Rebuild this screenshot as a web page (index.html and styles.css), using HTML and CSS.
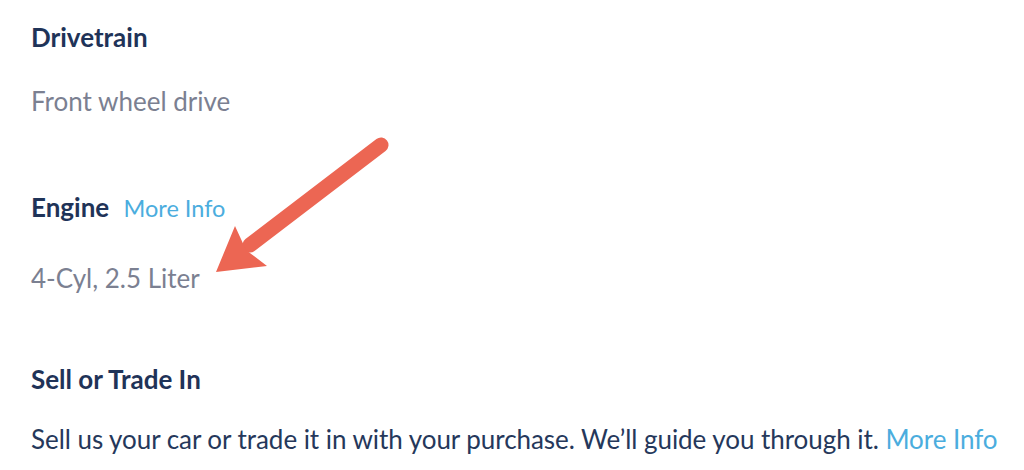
FILE: index.html
```
<!DOCTYPE html>
<html lang="en">
<head>
    <meta charset="UTF-8">
    <title>Vehicle details</title>
    <link rel="stylesheet" href="styles.css">
</head>
<body>
<div class="specs">
    <div class="spec spec-first">
        <h3 class="spec-title">Drivetrain</h3>
        <p class="spec-value">Front wheel drive</p>
    </div>
    <div class="spec spec-engine">
        <h3 class="spec-title">Engine <a class="more" href="#">More Info</a></h3>
        <p class="spec-value">4-Cyl, 2.5 Liter</p>
    </div>
    <div class="spec spec-trade">
        <h3 class="spec-title">Sell or Trade In</h3>
        <p class="spec-text">Sell us your car or trade it in with your purchase. We’ll guide you through it. <a class="more" href="#">More Info</a></p>
    </div>
</div>
<svg class="arrow" width="1024" height="470" viewBox="0 0 1024 470">
    <line x1="381" y1="145" x2="250" y2="245" stroke="#ec6653" stroke-width="15" stroke-linecap="round"/>
    <polygon points="216,272 235,226 246,250 267,266" fill="#ec6653"/>
</svg>
</body>
</html>
```
FILE: styles.css
```
body{ margin:0; background:#fff; font-family:Lato, "Noto Sans", sans-serif; }
.specs{ display:flex; flex-direction:column; padding:22px 0 0 31px; }
.spec-title{ margin:0; font-size:26px; line-height:30px; font-weight:bold; color:#1f3358; }
.spec-value{ margin:34px 0 0; font-size:26px; line-height:30px; color:#7b8091; }
.spec-text{ margin:30px 0 0; font-size:26px; line-height:30px; color:#25385b; white-space:nowrap; letter-spacing:-0.05px; }
.spec-engine{ margin-top:76px; }
.spec-trade{ margin-top:71px; }
.spec-engine .spec-value{ margin-top:40px; }
.more{ font-weight:normal; color:#4badde; text-decoration:none; }
.spec-title .more{ font-size:23.5px; margin-left:8px; }
.arrow{ position:absolute; left:0; top:0; pointer-events:none; }
```
